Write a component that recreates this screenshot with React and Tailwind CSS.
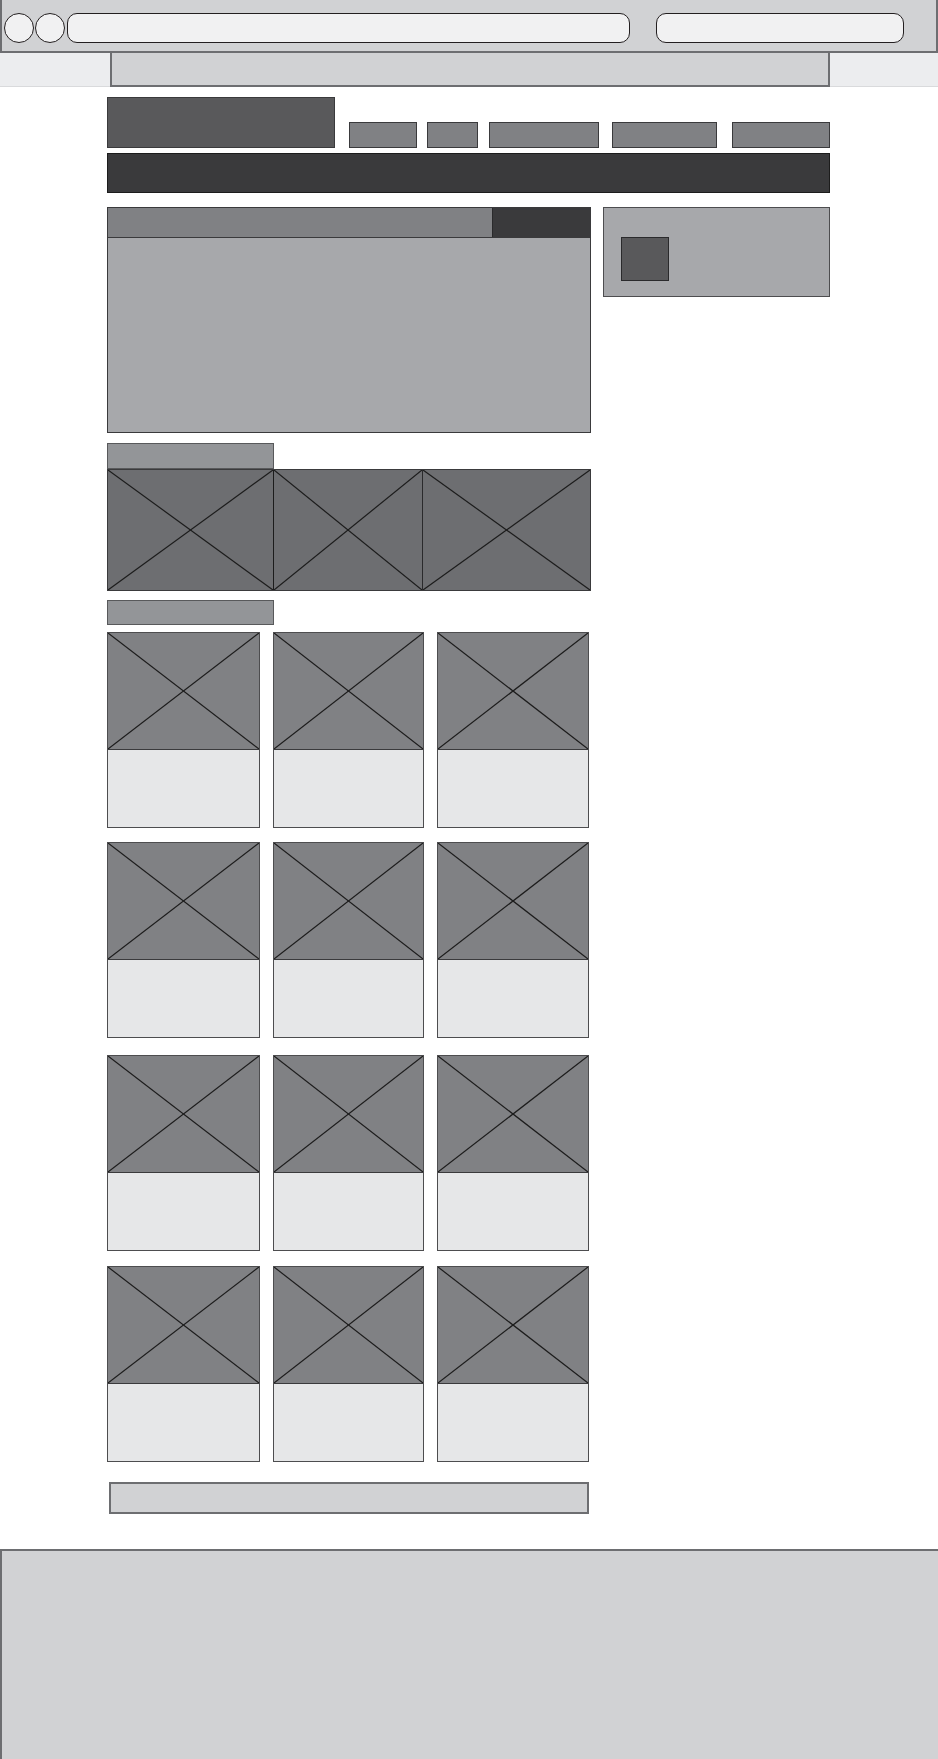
import React from 'react';

const Cross = ({ className = '' }) => (
  <svg className={`absolute inset-0 h-full w-full ${className}`} viewBox="0 0 100 100" preserveAspectRatio="none">
    <line x1="0" y1="0" x2="100" y2="100" stroke="#1c1c1c" strokeWidth="1.2" vectorEffect="non-scaling-stroke" />
    <line x1="100" y1="0" x2="0" y2="100" stroke="#1c1c1c" strokeWidth="1.2" vectorEffect="non-scaling-stroke" />
  </svg>
);

const ImageBox = ({ className }) => (
  <div className={`relative ${className}`}>
    <Cross />
  </div>
);

const Card = () => (
  <div className="flex h-[196px] flex-col border border-[#4d4d4f]">
    <ImageBox className="h-[117px] shrink-0 border-b border-[#3a3a3c] bg-[#808184]" />
    <div className="flex-1 bg-[#e6e7e8]" />
  </div>
);

const Browser = () => (
  <>
    <div className="flex h-[53px] items-start border-b-2 border-l-2 border-r-2 border-[#6d6e71] bg-[#d1d2d4] pl-[2px] pt-[13px]">
      <div className="h-[30px] w-[30px] rounded-full border border-[#231f20] bg-[#f1f1f2]" />
      <div className="ml-[1px] h-[30px] w-[30px] rounded-full border border-[#231f20] bg-[#f1f1f2]" />
      <div className="ml-[2px] h-[30px] w-[563px] rounded-[10px] border border-[#231f20] bg-[#f1f1f2]" />
      <div className="ml-[26px] h-[30px] w-[248px] rounded-[10px] border border-[#231f20] bg-[#f1f1f2]" />
    </div>
    <div className="flex h-[34px]">
      <div className="w-[110px] border-b border-[#d9dadc] bg-[#ecedef]" />
      <div className="w-[720px] border-b-2 border-l-2 border-r-2 border-[#6d6e71] bg-[#d1d2d4]" />
      <div className="flex-1 border-b border-[#d9dadc] bg-[#ecedef]" />
    </div>
  </>
);

const navItems = [
  { w: 'w-[68px]', ml: 'ml-[14px]' },
  { w: 'w-[51px]', ml: 'ml-[10px]' },
  { w: 'w-[110px]', ml: 'ml-[11px]' },
  { w: 'w-[105px]', ml: 'ml-[13px]' },
  { w: 'w-[98px]', ml: 'ml-[15px]' },
];

const rowGaps = ['mt-[7px]', 'mt-[14px]', 'mt-[17px]', 'mt-[15px]'];

export default function App() {
  return (
    <div className="min-h-[1759px] w-[938px] bg-white">
      <Browser />

      <div className="ml-[107px] w-[723px] pt-[10px]">
        {/* header */}
        <div className="flex items-end">
          <div className="h-[51px] w-[228px] border border-[#3a3a3c] bg-[#59595b]" />
          {navItems.map((item, i) => (
            <div key={i} className={`h-[26px] ${item.w} ${item.ml} border border-[#3a3a3c] bg-[#808184]`} />
          ))}
        </div>
        <div className="mt-[5px] h-[40px] border border-[#1c1c1c] bg-[#3a3a3c]" />

        <div className="mt-[14px] flex items-start gap-[12px]">
          {/* main column */}
          <div className="w-[484px]">
            <div className="h-[226px] border border-[#3a3a3c] bg-[#a7a8ab]">
              <div className="flex h-[30px] border-b border-[#3a3a3c]">
                <div className="flex-1 bg-[#808184]" />
                <div className="w-[98px] border-l border-[#2a2a2c] bg-[#3a3a3c]" />
              </div>
            </div>

            <div className="mt-[10px] h-[26px] w-[167px] border border-[#58595b] bg-[#939598]" />
            <div className="flex h-[122px] border border-[#3a3a3c] bg-[#6d6e71]">
              <ImageBox className="w-[166px] border-r border-[#1c1c1c]" />
              <ImageBox className="w-[149px] border-r border-[#2a2a2c]" />
              <ImageBox className="flex-1" />
            </div>

            <div className="mt-[9px] h-[25px] w-[167px] border border-[#58595b] bg-[#939598]" />
            {rowGaps.map((gap, r) => (
              <div key={r} className={`${gap} grid grid-cols-[153px_151px_152px] gap-x-[13px]`}>
                <Card />
                <Card />
                <Card />
              </div>
            ))}

            <div className="ml-[2px] mt-[20px] h-[32px] w-[480px] border-2 border-[#6d6e71] bg-[#d1d2d4]" />
          </div>

          {/* sidebar */}
          <div className="h-[90px] flex-1 border border-[#4d4d4f] bg-[#a7a8ab] pl-[17px] pt-[29px]">
            <div className="h-[44px] w-[48px] border border-[#2a2a2c] bg-[#59595b]" />
          </div>
        </div>
      </div>

      <div className="mt-[35px] h-[210px] border-l-2 border-t-2 border-[#6d6e71] bg-[#d1d2d4]" />
    </div>
  );
}
